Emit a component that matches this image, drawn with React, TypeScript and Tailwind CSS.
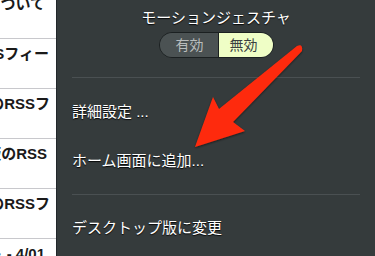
import React from "react";

const rows = [
  { text: "ニュースについて", pr: "pr-[11px]" },
  { text: "RSSフィー", pr: "pr-[7px]" },
  { text: "のRSSフ", pr: "pr-[6px]" },
  { text: "最新版のRSS", pr: "pr-[9px]" },
  { text: "のRSSフ", pr: "pr-[6px]" },
  { text: "アップデート - 4/01", pr: "pr-[11px]" },
];

const shadow = "[text-shadow:0_1px_1px_rgba(0,0,0,0.9)]";

function Arrow() {
  return (
    <svg
      className="absolute left-0 top-0 pointer-events-none"
      width="375"
      height="256"
      viewBox="0 0 375 256"
    >
      <defs>
        <filter id="sh" x="-20%" y="-20%" width="140%" height="140%">
          <feDropShadow dx="0" dy="1" stdDeviation="1.2" floodColor="#000" floodOpacity="0.55" />
        </filter>
      </defs>
      <path
        d="M195 147 L213 97 L219 109 L297 46 Q303 43 302 51 L233 122 L245 131 Z"
        fill="#fe2c0c"
        filter="url(#sh)"
      />
    </svg>
  );
}

export default function App() {
  return (
    <div
      className="relative flex w-[375px] h-[256px] overflow-hidden bg-white"
      style={{ fontFamily: '"Liberation Sans", "Noto Sans CJK JP", sans-serif' }}
    >
      <div className="w-[56px] shrink-0 overflow-hidden bg-white">
        <div className="-mt-[11px]">
          {rows.map((r, i) => (
            <div key={i} className="h-[50px] border-b border-[#c8c8cc]">
              <div className={`flex justify-end overflow-hidden pt-[5px] ${r.pr}`}>
                <span className="shrink-0 whitespace-nowrap text-[15px] leading-[20px] font-bold text-[#1a1a1a]">
                  {r.text}
                </span>
              </div>
            </div>
          ))}
        </div>
      </div>

      <div className="flex-1 flex flex-col border-l border-[#22272a] bg-[#353b3c] text-white">
        <div className={`pt-[8px] text-center text-[15px] leading-[20px] ${shadow}`}>
          モーションジェスチャ
        </div>
        <div className="mt-[4px] flex justify-center">
          <div className="flex h-[26px] w-[115px] overflow-hidden rounded-full border border-[#1b2021] text-[14px] leading-[24px]">
            <div className="w-[58px] bg-[#4b5253] pl-[2px] text-center text-[#b9bdbd]">有効</div>
            <div className="flex-1 border-l border-[#1b2021] bg-[#effec6] pr-[4px] text-center text-[#3a3f3f]">
              無効
            </div>
          </div>
        </div>

        <div className="mx-[15px] mt-[19px] h-px bg-[#4a5052]" />
        <div className={`ml-[15px] mt-[24px] text-[15px] leading-[20px] ${shadow}`}>詳細設定 ...</div>
        <div className={`ml-[15px] mt-[29px] text-[15px] leading-[20px] ${shadow}`}>ホーム画面に追加...</div>

        <div className="mx-[15px] mt-[23px] h-px bg-[#4a5052]" />
        <div className={`ml-[15px] mt-[23px] text-[15px] leading-[20px] ${shadow}`}>デスクトップ版に変更</div>
      </div>

      <Arrow />
    </div>
  );
}
